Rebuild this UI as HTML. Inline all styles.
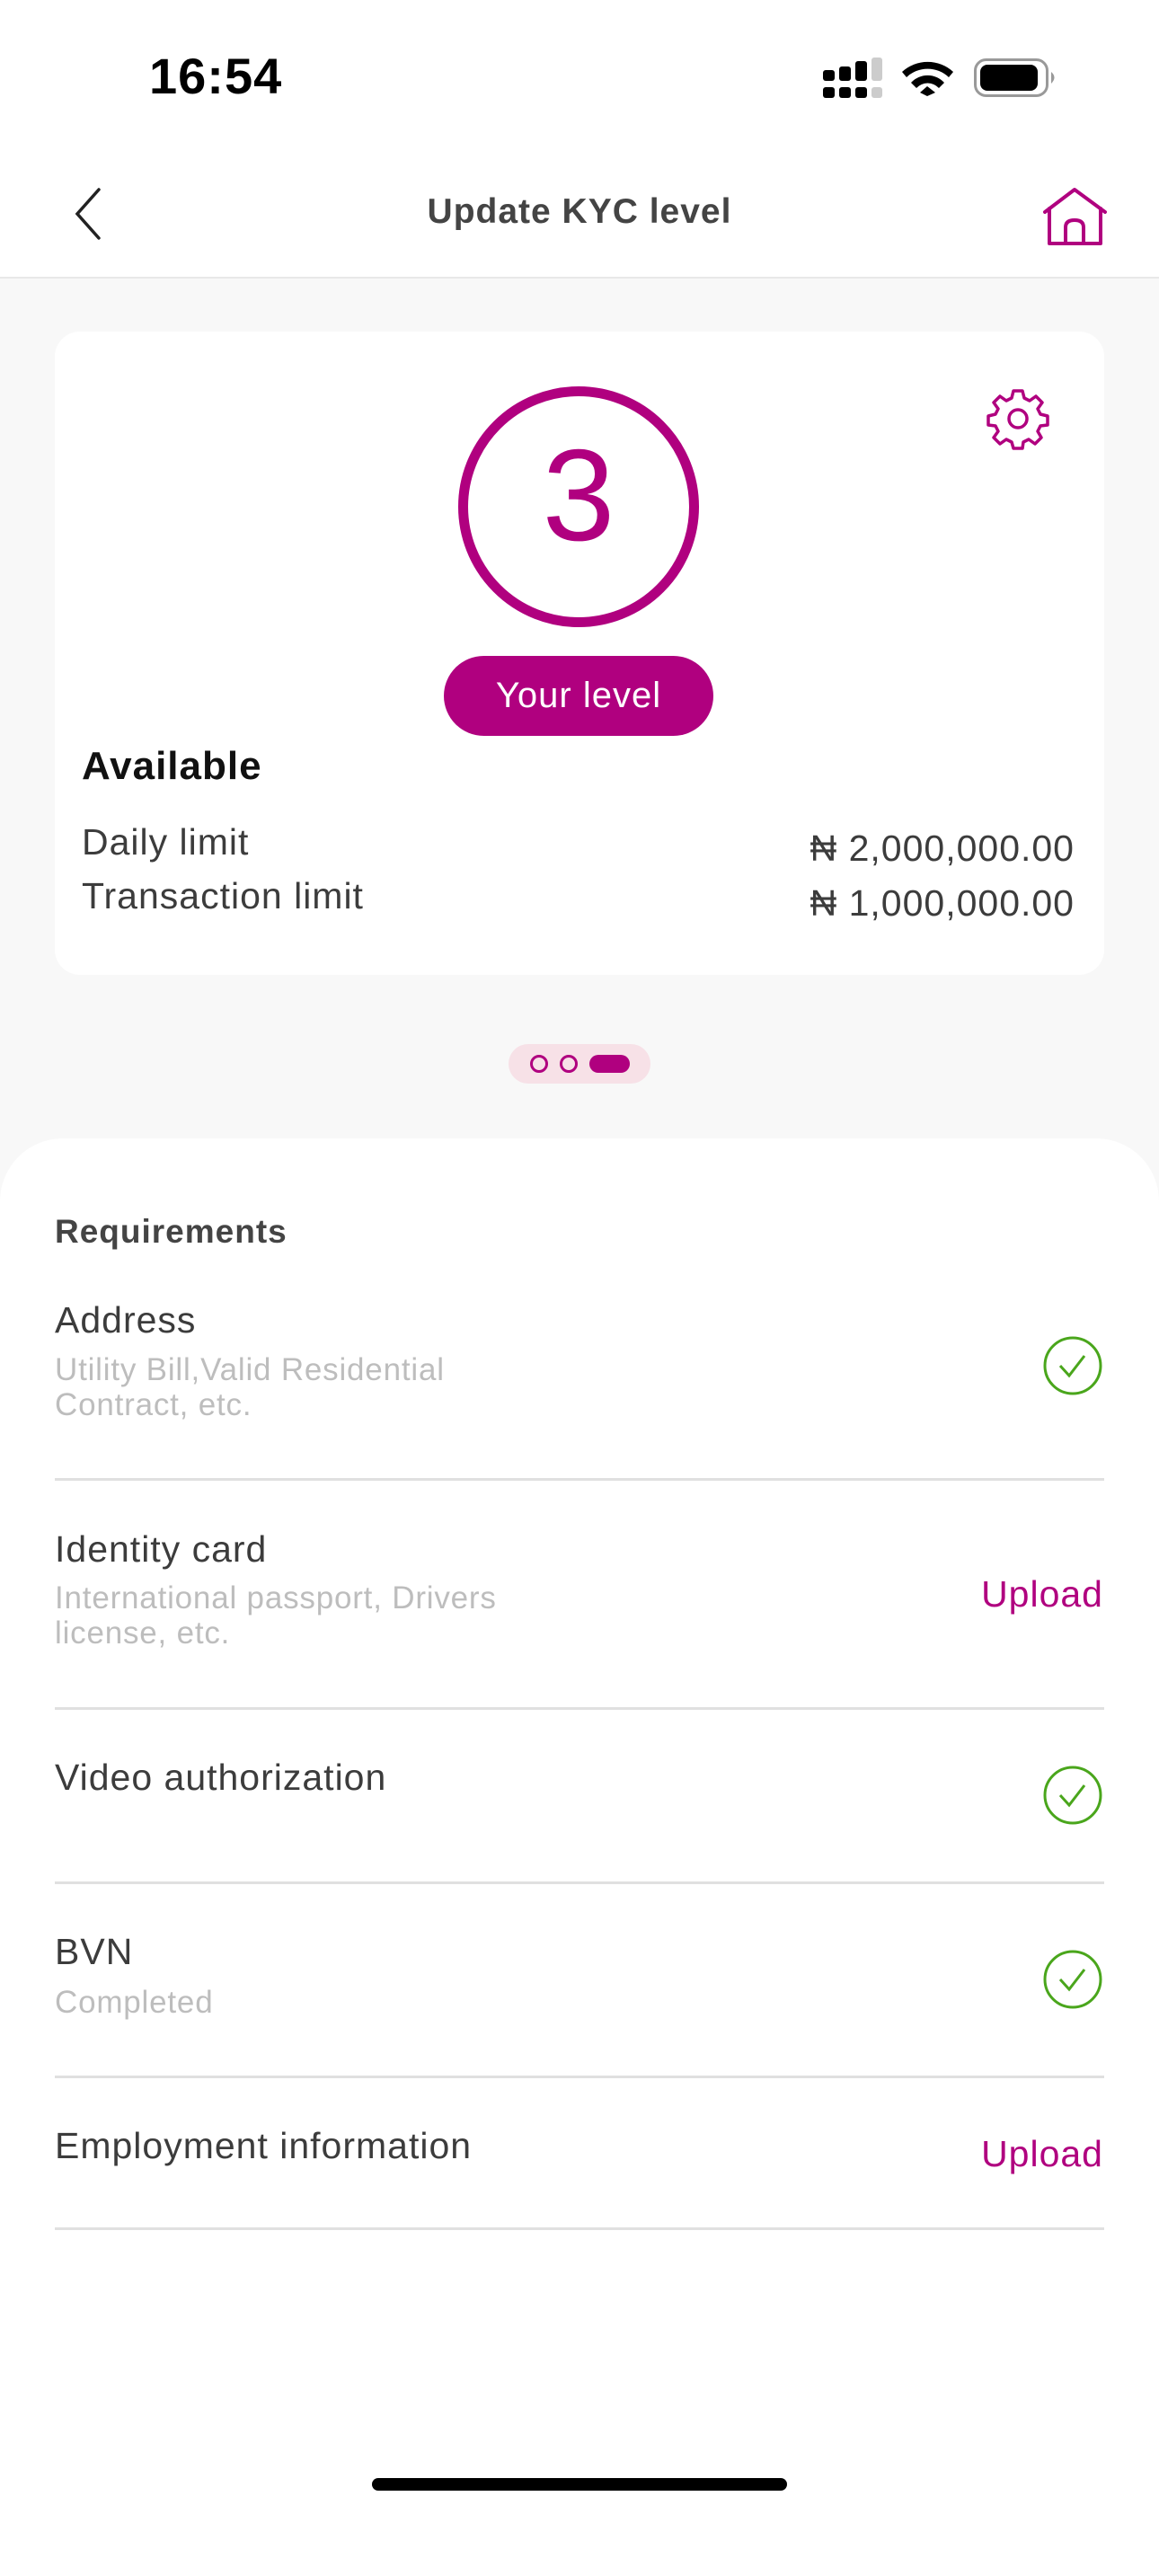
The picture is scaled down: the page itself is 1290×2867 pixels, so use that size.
<!DOCTYPE html>
<html><head><meta charset="utf-8"><style>
*{margin:0;padding:0;box-sizing:border-box}
body{width:1290px;height:2796px;background:#f8f8f8;font-family:"Liberation Sans",sans-serif;position:relative;overflow:hidden;color:#444}
.a{position:absolute;white-space:nowrap}
.lbl{font-size:41px;color:#3c3c3c;letter-spacing:1px}
.sub{font-size:35px;color:#bdbdbd;line-height:39px;letter-spacing:0.8px}
.up{font-size:41px;color:#b0007f;right:62px;letter-spacing:1px}
.div{position:absolute;left:61px;width:1168px;height:3px;background:#e0e0e0}
</style></head><body>
<div class="a" style="left:0;top:0;width:1290px;height:308px;background:#fff"></div>
<div class="a" style="left:166px;top:52px;font-size:56px;font-weight:bold;color:#000;letter-spacing:1px">16:54</div>
<svg class="a" style="left:912px;top:60px" width="270" height="54" viewBox="912 60 270 54">
<rect x="916" y="78" width="13" height="12" rx="3"/><rect x="934" y="74" width="13" height="16" rx="3"/><rect x="952" y="68" width="13" height="22" rx="3"/><rect x="970" y="64" width="12" height="26" rx="3" fill="#ccc"/>
<rect x="916" y="97" width="13" height="12" rx="3"/><rect x="934" y="97" width="13" height="12" rx="3"/><rect x="952" y="97" width="13" height="12" rx="3"/><rect x="970" y="97" width="12" height="12" rx="3" fill="#ccc"/>
<path d="M1004 80 A42 42 0 0 1 1061 80 L1056 86 A34 34 0 0 0 1009 86Z M1014 92 A25 25 0 0 1 1051 92 L1045 98 A17 17 0 0 0 1020 98Z M1024 103 L1032 96 L1041 103 L1032 107Z"/>
<rect x="1085.5" y="66.5" width="80" height="40" rx="12" fill="none" stroke="#999" stroke-width="3"/>
<rect x="1091" y="72" width="64" height="29" rx="8"/>
<path d="M1170 80 Q1177 86 1170 93Z" fill="#999"/>
</svg>
<svg class="a" style="left:80px;top:205px" width="40" height="70"><path d="M30 6 L6 33 L30 60" fill="none" stroke="#222" stroke-width="3.5" stroke-linecap="round"/></svg>
<div class="a" style="left:0;width:1290px;text-align:center;top:214px;font-size:39px;font-weight:bold;color:#444;letter-spacing:1px">Update KYC level</div>
<svg class="a" style="left:1160px;top:208px" width="74" height="68" viewBox="1160 208 74 68"><g fill="none" stroke="#b0007f" stroke-width="4" stroke-linejoin="round" stroke-linecap="round"><path d="M1163 236 L1196 211 L1230 236 M1168 232 L1168 271 L1225 271 L1225 232 M1186 271 L1186 253 Q1186 245 1196 245 Q1206 245 1206 253 L1206 271"/></g></svg>
<div class="a" style="left:0;top:308px;width:1290px;height:2px;background:#e8e8e8"></div>

<div class="a" style="left:61px;top:369px;width:1168px;height:716px;background:#fff;border-radius:28px"></div>
<div class="a" style="left:510px;top:430px;width:268px;height:268px;border:11px solid #b0007f;border-radius:50%"></div>
<div class="a" style="left:0;width:1288px;text-align:center;top:479px;font-size:145px;color:#b0007f;line-height:145px">3</div>
<svg class="a" style="left:1096px;top:429px" width="74" height="74" viewBox="-37 -37 74 74"><g fill="none" stroke="#b0007f" stroke-width="3.5" stroke-linejoin="round">
<path d="M-5 -31 L5 -31 L7 -23 L13 -20 L20 -25 L27 -18 L22 -11 L25 -5 L33 -3 L33 7 L25 8 L22 14 L26 21 L19 28 L12 23 L6 26 L5 33 L-5 33 L-7 26 L-13 23 L-20 28 L-27 21 L-22 14 L-25 8 L-33 7 L-33 -3 L-25 -5 L-22 -11 L-27 -18 L-20 -25 L-13 -20 L-7 -23Z"/><circle r="10"/></g></svg>
<div class="a" style="left:494px;top:730px;width:300px;height:89px;border-radius:45px;background:#b0007f;color:#fff;font-size:40px;text-align:center;line-height:89px;letter-spacing:1px">Your level</div>
<div class="a" style="left:91px;top:828px;font-size:44px;font-weight:bold;color:#111;letter-spacing:1px">Available</div>
<div class="a lbl" style="left:91px;top:914px">Daily limit</div>
<div class="a lbl" style="left:91px;top:974px">Transaction limit</div>
<div class="a lbl" style="right:94px;top:921px">₦ 2,000,000.00</div>
<div class="a lbl" style="right:94px;top:982px">₦ 1,000,000.00</div>

<div class="a" style="left:566px;top:1162px;width:158px;height:44px;border-radius:22px;background:#f7e1e7"></div>
<div class="a" style="left:590px;top:1174px;width:20px;height:20px;border:3px solid #b0007f;border-radius:50%"></div>
<div class="a" style="left:623px;top:1174px;width:20px;height:20px;border:3px solid #b0007f;border-radius:50%"></div>
<div class="a" style="left:656px;top:1174px;width:45px;height:20px;background:#b0007f;border-radius:10px"></div>

<div class="a" style="left:0;top:1267px;width:1290px;height:1600px;background:#fff;border-radius:70px 70px 0 0"></div>
<div class="a" style="left:61px;top:1350px;font-size:37px;font-weight:bold;color:#444;letter-spacing:1px">Requirements</div>

<div class="a lbl" style="left:61px;top:1446px">Address</div>
<div class="a sub" style="left:61px;top:1505px">Utility Bill,Valid Residential<br>Contract, etc.</div>
<div class="div" style="top:1645px"></div>
<div class="a lbl" style="left:61px;top:1701px">Identity card</div>
<div class="a sub" style="left:61px;top:1759px">International passport, Drivers<br>license, etc.</div>
<div class="a up" style="top:1751px">Upload</div>
<div class="div" style="top:1900px"></div>
<div class="a lbl" style="left:61px;top:1955px">Video authorization</div>
<div class="div" style="top:2094px"></div>
<div class="a lbl" style="left:61px;top:2149px">BVN</div>
<div class="a sub" style="left:61px;top:2209px">Completed</div>
<div class="div" style="top:2310px"></div>
<div class="a lbl" style="left:61px;top:2365px">Employment information</div>
<div class="a up" style="top:2374px">Upload</div>
<div class="div" style="top:2479px"></div>

<svg class="a" style="left:1160px;top:1486px" width="68" height="68"><circle cx="34" cy="34" r="31" fill="none" stroke="#4aa61c" stroke-width="3"/><path d="M20 34 L30 45 L47 23" fill="none" stroke="#4aa61c" stroke-width="3"/></svg>
<svg class="a" style="left:1160px;top:1964px" width="68" height="68"><circle cx="34" cy="34" r="31" fill="none" stroke="#4aa61c" stroke-width="3"/><path d="M20 34 L30 45 L47 23" fill="none" stroke="#4aa61c" stroke-width="3"/></svg>
<svg class="a" style="left:1160px;top:2169px" width="68" height="68"><circle cx="34" cy="34" r="31" fill="none" stroke="#4aa61c" stroke-width="3"/><path d="M20 34 L30 45 L47 23" fill="none" stroke="#4aa61c" stroke-width="3"/></svg>

<div class="a" style="left:414px;top:2758px;width:462px;height:14px;border-radius:7px;background:#000"></div>
</body></html>
